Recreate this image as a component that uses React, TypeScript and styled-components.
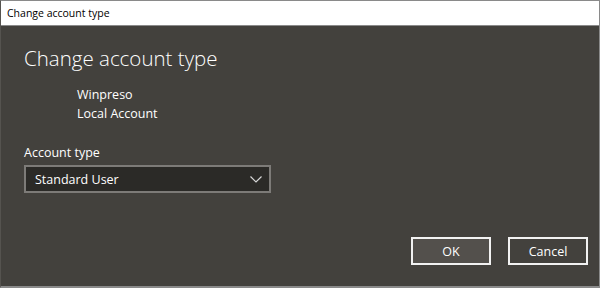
import styled, { createGlobalStyle } from 'styled-components';

const Global = createGlobalStyle`
  html, body {
    margin: 0;
    padding: 0;
    background: #43413d;
  }
  * {
    box-sizing: border-box;
  }
`;

export default function App() {
  return (
    <>
      <Global />
      <Window>
        <TitleBar>Change account type</TitleBar>
        <Body>
          <Heading>Change account type</Heading>
          <UserInfo>
            <InfoLine>Winpreso</InfoLine>
            <InfoLine>Local Account</InfoLine>
          </UserInfo>
          <Label>Account type</Label>
          <Dropdown>
            <span>Standard User</span>
            <svg width="12" height="7" viewBox="0 0 12 7">
              <path d="M0.5 0.5 L6 6 L11.5 0.5" fill="none" stroke="#d8d8d8" strokeWidth="1.2" />
            </svg>
          </Dropdown>
          <Footer>
            <Button $primary>OK</Button>
            <Button>Cancel</Button>
          </Footer>
        </Body>
      </Window>
    </>
  );
}

const Window = styled.div`
  width: 600px;
  height: 288px;
  display: flex;
  flex-direction: column;
  border: 1px solid #8a8a8a;
  border-left-color: #55534f;
  border-bottom: 2px solid #8a8a8a;
  background: #43413d;
  font-family: 'Open Sans', 'Noto Sans', sans-serif;
`;

const TitleBar = styled.div`
  height: 25px;
  flex-shrink: 0;
  background: #ffffff;
  color: #000;
  font-size: 10.5px;
  line-height: 25px;
  padding-left: 6px;
  border-bottom: 1px solid #8a8a8a;
`;

const Body = styled.div`
  flex: 1;
  display: flex;
  flex-direction: column;
  padding: 19px 11px 0 23px;
  color: #ffffff;
`;

const Heading = styled.div`
  font-size: 20.5px;
  font-weight: 300;
  line-height: 26px;
`;

const UserInfo = styled.div`
  margin: 14px 0 0 53px;
  display: flex;
  flex-direction: column;
`;

const InfoLine = styled.div`
  font-size: 12.5px;
  line-height: 19px;
`;

const Label = styled.div`
  margin-top: 21px;
  font-size: 12.5px;
  line-height: 18px;
`;

const Dropdown = styled.div`
  margin-top: 3px;
  width: 247px;
  height: 28px;
  border: 2px solid #7d7b78;
  background: #2b2a27;
  display: flex;
  align-items: center;
  justify-content: space-between;
  padding: 0 7px 0 9px;
  font-size: 12.5px;
  color: #ffffff;
`;

const Footer = styled.div`
  margin-top: 44px;
  display: flex;
  justify-content: flex-end;
  gap: 17px;
`;

const Button = styled.div<{ $primary?: boolean }>`
  width: 80px;
  height: 28px;
  border: 2px solid #f2f2f2;
  background: ${({ $primary }) => ($primary ? '#53504c' : '#43413d')};
  display: flex;
  align-items: center;
  justify-content: center;
  font-size: 12.5px;
  color: #ffffff;
`;
